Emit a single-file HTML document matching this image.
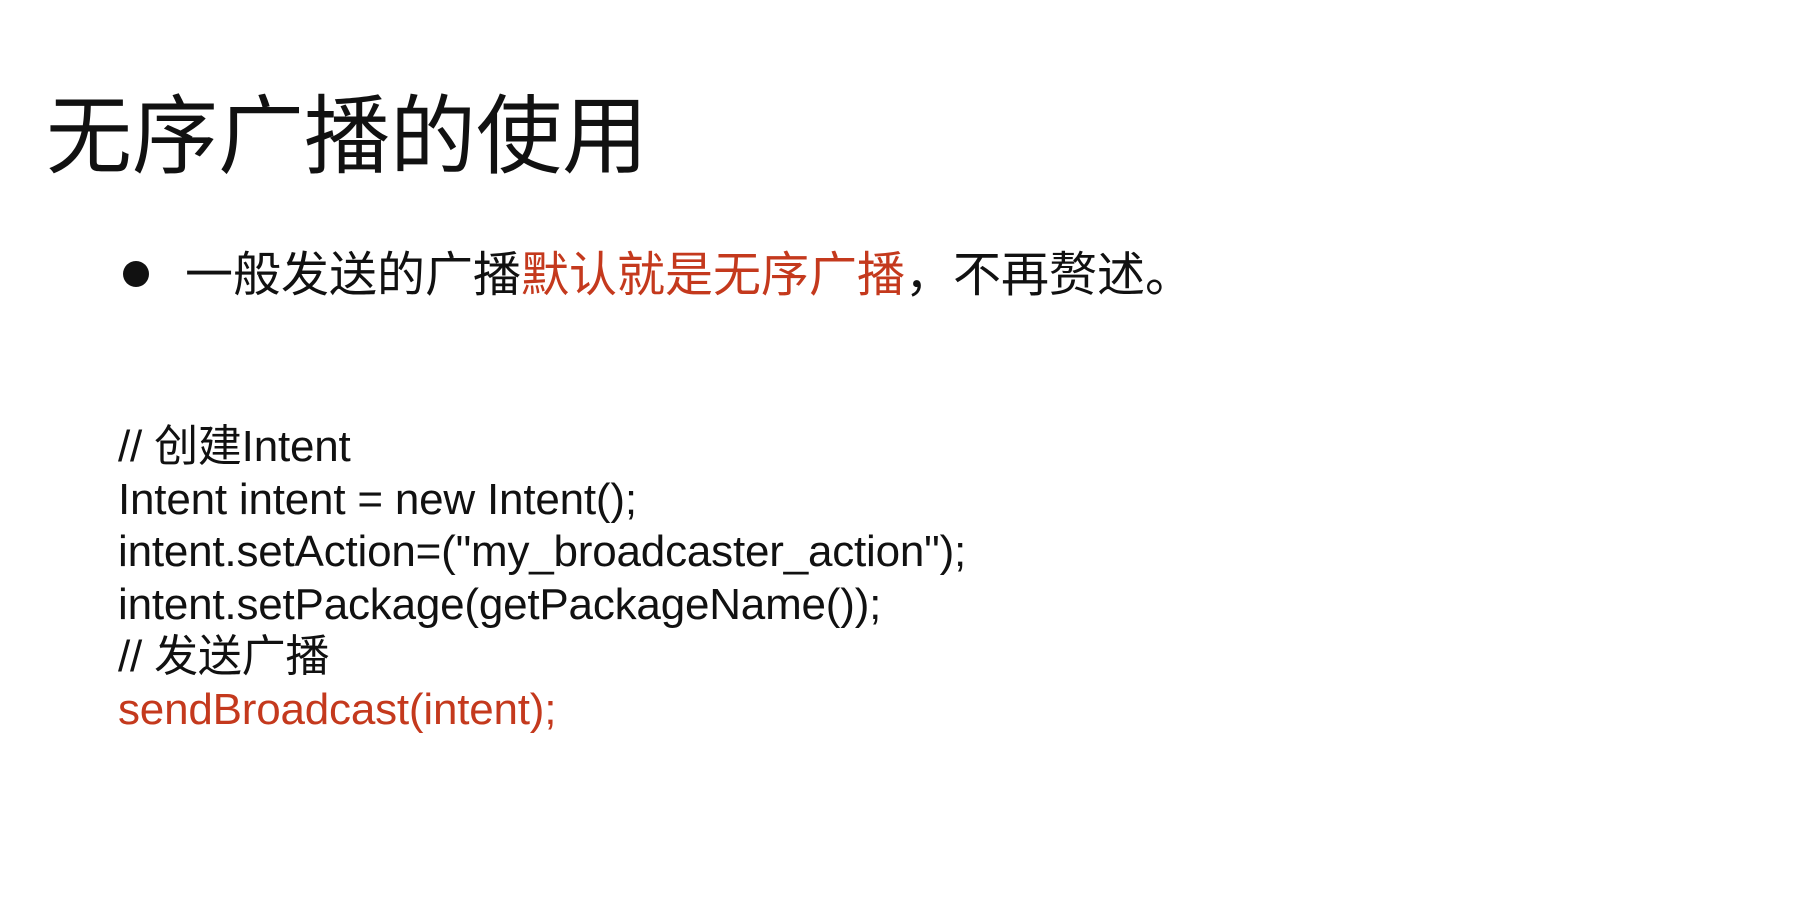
<!DOCTYPE html>
<html><head><meta charset="utf-8"><style>
html,body{margin:0;padding:0;background:#fff;width:1804px;height:908px;overflow:hidden}
.t{position:absolute;left:46px;top:94px;font:86px/1 "Liberation Sans","Noto Sans CJK SC",sans-serif;color:#111;white-space:nowrap}
.b{position:absolute;left:185px;top:252px;font:48px/1 "Liberation Sans","Noto Sans CJK SC",sans-serif;color:#111;white-space:nowrap}
.dot{position:absolute;left:123px;top:261px;width:26px;height:26px;border-radius:50%;background:#111}
.r{color:#c4391d}
.c{position:absolute;left:118px;top:421px;font:44px/52.6px "Liberation Sans","Noto Sans CJK SC",sans-serif;color:#111;white-space:pre;letter-spacing:-0.2px}
</style></head><body>
<div class="t">无序广播的使用</div>
<div class="dot"></div>
<div class="b">一般发送的广播<span class="r">默认就是无序广播</span>，不再赘述。</div>
<div class="c">// 创建Intent
Intent intent = new Intent();
intent.setAction=("my_broadcaster_action");
intent.setPackage(getPackageName());
// 发送广播
<span class="r">sendBroadcast(intent);</span></div>
</body></html>
